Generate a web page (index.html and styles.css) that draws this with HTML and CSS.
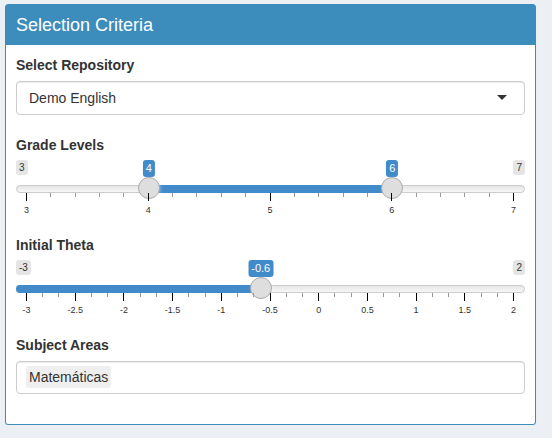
FILE: index.html
```html
<!DOCTYPE html>
<html>
<head>
<meta charset="utf-8">
<title>Selection Criteria</title>
<link rel="stylesheet" href="styles.css">
</head>
<body>
<div class="box">
  <div class="box-header"><h3 class="box-title">Selection Criteria</h3></div>
  <div class="box-body">
    <div class="form-group select-group">
      <label class="control-label">Select Repository</label>
      <div class="selectize-input single">Demo English</div>
    </div>

    <div class="form-group">
      <label class="control-label">Grade Levels</label>
      <div class="irs">
        <span class="irs-line"></span>
        <span class="irs-min">3</span>
        <span class="irs-max">7</span>
        <span class="irs-bar" style="--a:25;--b:75"></span>
        <span class="irs-single" style="--p:25">4</span>
        <span class="irs-single" style="--p:75">6</span>
        <span class="irs-handle" style="--p:25"></span>
        <span class="irs-handle" style="--p:75"></span>
        <div class="irs-grid">
          <span class="tick" style="--p:0"></span>
          <span class="tick small" style="--p:5"></span>
          <span class="tick small" style="--p:10"></span>
          <span class="tick small" style="--p:15"></span>
          <span class="tick small" style="--p:20"></span>
          <span class="tick" style="--p:25"></span>
          <span class="tick small" style="--p:30"></span>
          <span class="tick small" style="--p:35"></span>
          <span class="tick small" style="--p:40"></span>
          <span class="tick small" style="--p:45"></span>
          <span class="tick" style="--p:50"></span>
          <span class="tick small" style="--p:55"></span>
          <span class="tick small" style="--p:60"></span>
          <span class="tick small" style="--p:65"></span>
          <span class="tick small" style="--p:70"></span>
          <span class="tick" style="--p:75"></span>
          <span class="tick small" style="--p:80"></span>
          <span class="tick small" style="--p:85"></span>
          <span class="tick small" style="--p:90"></span>
          <span class="tick small" style="--p:95"></span>
          <span class="tick" style="--p:100"></span>
          <span class="tick-text" style="--p:0">3</span>
          <span class="tick-text" style="--p:25">4</span>
          <span class="tick-text" style="--p:50">5</span>
          <span class="tick-text" style="--p:75">6</span>
          <span class="tick-text" style="--p:100">7</span>
        </div>
      </div>
    </div>

    <div class="form-group">
      <label class="control-label">Initial Theta</label>
      <div class="irs">
        <span class="irs-line"></span>
        <span class="irs-min">-3</span>
        <span class="irs-max">2</span>
        <span class="irs-bar single" style="--p:48"></span>
        <span class="irs-single" style="--p:48">-0.6</span>
        <span class="irs-handle" style="--p:48"></span>
        <div class="irs-grid">
          <span class="tick" style="--p:0"></span>
          <span class="tick small" style="--p:3.333"></span>
          <span class="tick small" style="--p:6.667"></span>
          <span class="tick" style="--p:10"></span>
          <span class="tick small" style="--p:13.333"></span>
          <span class="tick small" style="--p:16.667"></span>
          <span class="tick" style="--p:20"></span>
          <span class="tick small" style="--p:23.333"></span>
          <span class="tick small" style="--p:26.667"></span>
          <span class="tick" style="--p:30"></span>
          <span class="tick small" style="--p:33.333"></span>
          <span class="tick small" style="--p:36.667"></span>
          <span class="tick" style="--p:40"></span>
          <span class="tick small" style="--p:43.333"></span>
          <span class="tick small" style="--p:46.667"></span>
          <span class="tick" style="--p:50"></span>
          <span class="tick small" style="--p:53.333"></span>
          <span class="tick small" style="--p:56.667"></span>
          <span class="tick" style="--p:60"></span>
          <span class="tick small" style="--p:63.333"></span>
          <span class="tick small" style="--p:66.667"></span>
          <span class="tick" style="--p:70"></span>
          <span class="tick small" style="--p:73.333"></span>
          <span class="tick small" style="--p:76.667"></span>
          <span class="tick" style="--p:80"></span>
          <span class="tick small" style="--p:83.333"></span>
          <span class="tick small" style="--p:86.667"></span>
          <span class="tick" style="--p:90"></span>
          <span class="tick small" style="--p:93.333"></span>
          <span class="tick small" style="--p:96.667"></span>
          <span class="tick" style="--p:100"></span>
          <span class="tick-text" style="--p:0">-3</span>
          <span class="tick-text" style="--p:10">-2.5</span>
          <span class="tick-text" style="--p:20">-2</span>
          <span class="tick-text" style="--p:30">-1.5</span>
          <span class="tick-text" style="--p:40">-1</span>
          <span class="tick-text" style="--p:50">-0.5</span>
          <span class="tick-text" style="--p:60">0</span>
          <span class="tick-text" style="--p:70">0.5</span>
          <span class="tick-text" style="--p:80">1</span>
          <span class="tick-text" style="--p:90">1.5</span>
          <span class="tick-text" style="--p:100">2</span>
        </div>
      </div>
    </div>

    <div class="form-group select-group last">
      <label class="control-label">Subject Areas</label>
      <div class="selectize-input multi"><span class="item-token">Matemáticas</span></div>
    </div>
  </div>
</div>
</body>
</html>
```
FILE: styles.css
```css
* { box-sizing: border-box; }
html, body { margin: 0; }
body {
  background: #ecf0f5;
  font-family: "Liberation Sans", Arial, sans-serif;
  font-size: 14px;
  line-height: 20px;
  color: #333;
  padding: 4px 0 0 5px;
}
.box {
  width: 531px;
  background: #fff;
  border: 1px solid #3c8dbc;
  border-radius: 3px;
  box-shadow: 0 1px 1px rgba(0, 0, 0, 0.1);
}
.box-header {
  background: #3c8dbc;
  color: #fff;
  padding: 10px;
}
.box-title {
  margin: 0;
  font-size: 18px;
  line-height: 20px;
  font-weight: 400;
}
.box-body { padding: 10px 10px 15px; }
.form-group { margin-bottom: 15px; }
.select-group { margin-bottom: 20px; }
.select-group.last { margin-bottom: 15px; }
.control-label {
  display: block;
  font-weight: 700;
  line-height: 20px;
  margin-bottom: 5px;
}
.select-group .control-label { margin-bottom: 6px; }

.selectize-input {
  position: relative;
  background: #fff;
  border: 1px solid #ccc;
  border-radius: 4px;
  padding: 6px 12px;
  height: 34px;
  line-height: 20px;
  box-shadow: inset 0 1px 1px rgba(0, 0, 0, 0.075);
}
.selectize-input.single::after {
  content: "";
  position: absolute;
  top: 50%;
  right: 17px;
  margin-top: -3px;
  width: 0;
  height: 0;
  border-style: solid;
  border-width: 5px 5px 0;
  border-color: #333 transparent transparent;
}
.selectize-input.multi {
  height: 33px;
  padding: 4px 9px 5px;
}
.item-token {
  display: inline-block;
  background: #efefef;
  color: #333;
  padding: 1px 3px;
  border-radius: 3px;
  line-height: 20px;
}

.irs {
  position: relative;
  height: 60px;
}
.irs-line {
  position: absolute;
  top: 25px;
  left: 0;
  right: 0;
  height: 8px;
  border: 1px solid #ccc;
  border-radius: 8px;
  background: linear-gradient(to bottom, #dedede -50%, #fff 150%);
}
.irs-min, .irs-max {
  position: absolute;
  top: 0;
  padding: 1px 3px;
  font-size: 10px;
  line-height: 1.333;
  color: #333;
  background: rgba(0, 0, 0, 0.1);
  border-radius: 3px;
}
.irs-min { left: 0; }
.irs-max { right: 0; }
.irs-single {
  position: absolute;
  top: 0;
  left: calc((100% - 22px) * var(--p) / 100 + 11px);
  transform: translateX(-50%);
  padding: 1px 3px;
  font-size: 11px;
  line-height: 1.333;
  color: #fff;
  background: #428bca;
  border-radius: 3px;
  white-space: nowrap;
}
.irs-bar {
  position: absolute;
  top: 25px;
  height: 8px;
  background: #428bca;
  left: calc((100% - 22px) * var(--a) / 100 + 11px);
  width: calc((100% - 22px) * (var(--b) - var(--a)) / 100);
}
.irs-bar.single {
  left: 0;
  width: calc((100% - 22px) * var(--p) / 100 + 11px);
  border-radius: 8px 0 0 8px;
}
.irs-handle {
  position: absolute;
  top: 17px;
  left: calc((100% - 22px) * var(--p) / 100);
  width: 22px;
  height: 22px;
  border: 1px solid #ababab;
  background: #dedede;
  border-radius: 50%;
  box-shadow: 1px 1px 3px rgba(255, 255, 255, 0.3);
}
.irs-grid {
  position: absolute;
  top: 33px;
  left: 10px;
  right: 12px;
  height: 27px;
}
.tick {
  position: absolute;
  top: 0;
  left: calc(var(--p) * 1%);
  width: 1px;
  height: 8px;
  background: #000;
}
.tick.small {
  height: 4px;
  background: #999;
}
.tick-text {
  position: absolute;
  top: 12px;
  left: calc(var(--p) * 1% + 0.5px);
  transform: translateX(-50%);
  font-size: 9px;
  line-height: 10px;
  color: #333;
  white-space: nowrap;
}
```
